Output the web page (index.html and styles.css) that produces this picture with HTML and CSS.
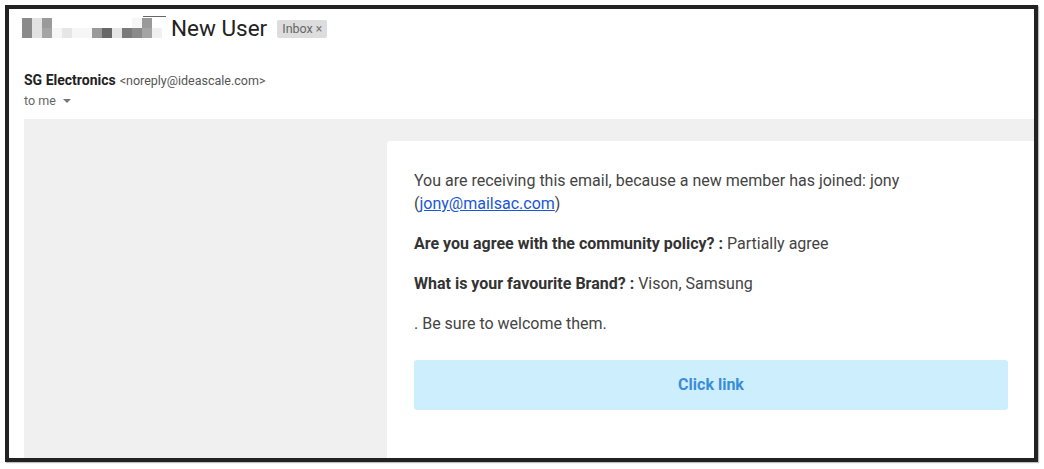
FILE: index.html
```html
<!DOCTYPE html>
<html lang="en">
<head>
<meta charset="utf-8">
<title>New User</title>
<link rel="stylesheet" href="styles.css">
</head>
<body>
<div class="frame">
  <div class="title-row">
    <div class="mosaic">
      <i class="c1"></i><i class="c2"></i><i class="c3"></i><i class="c0"></i><i class="c0"></i><i class="c0"></i><i class="c0"></i><i class="c0"></i><i class="c0"></i><i class="c0"></i><i class="c0"></i><i class="cf"></i><i class="c3"></i><i class="c0"></i>
      <i class="c1"></i><i class="c2"></i><i class="c4"></i><i class="cf"></i><i class="c5"></i><i class="cf"></i><i class="cf"></i><i class="c3"></i><i class="c6"></i><i class="c5"></i><i class="c7"></i><i class="c1"></i><i class="c4"></i><i class="c8"></i>
    </div>
    <h1 class="subject">New User</h1>
    <span class="chip">Inbox <span class="chip-x">×</span></span>
  </div>
  <div class="sender">
    <div class="from"><span class="from-name">SG Electronics</span> <span class="from-addr">&lt;noreply@ideascale.com&gt;</span></div>
    <div class="to">to me <svg class="caret" width="8" height="4" viewBox="0 0 8 4"><path d="M0 0h8L4 4z" fill="#777"/></svg></div>
  </div>
  <div class="mail-bg">
    <div class="card">
      <p class="para">You are receiving this email, because a new member has joined: jony <span class="nowrap">(<a class="link" href="#">jony@mailsac.com</a>)</span></p>
      <p class="para"><b class="label">Are you agree with the community policy? :</b> Partially agree</p>
      <p class="para"><b class="label">What is your favourite Brand? :</b> Vison, Samsung</p>
      <p class="para">. Be sure to welcome them.</p>
      <a class="button" href="#">Click link</a>
    </div>
  </div>
</div>
</body>
</html>
```
FILE: styles.css
```css
html, body {
  margin: 0;
  padding: 0;
  background: #ffffff;
}
body {
  font-family: Roboto, "Liberation Sans", Arial, sans-serif;
  width: 1044px;
  height: 469px;
  overflow: hidden;
}
.frame {
  margin: 5px 0 0 5px;
  height: 449px;
  width: 1010px;
  border: 4px solid #222222;
  box-shadow: 1px 1px 1px rgba(0,0,0,0.25);
  display: flex;
  flex-direction: column;
  padding-left: 15px;
  box-sizing: content-box;
  overflow: hidden;
}
.title-row {
  display: flex;
  align-items: center;
  height: 28px;
  margin-top: 5px;
}
.mosaic {
  position: relative;
  margin-left: -2px;
  display: grid;
  grid-template-columns: repeat(14, 10px);
  grid-template-rows: 10px 10px;
  width: 140px;
  height: 20px;
}
.mosaic::after {
  content: "";
  position: absolute;
  left: 121px;
  top: -2px;
  width: 23px;
  height: 1px;
  background: #666;
}
.mosaic i { display: block; }
.c0 { background: #ffffff; }
.cf { background: #f6f6f6; }
.c1 { background: #8a8a8a; }
.c2 { background: #e2e2e2; }
.c3 { background: #9a9a9a; }
.c4 { background: #a4a4a4; }
.c5 { background: #e6e6e6; }
.c6 { background: #686868; }
.c7 { background: #7a7a7a; }
.c8 { background: #f0f0f0; }
.subject {
  margin: 0 0 0 9px;
  font-family: Roboto, "Open Sans", sans-serif;
  font-weight: 400;
  font-size: 22.5px;
  color: #222222;
  line-height: 28px;
}
.chip {
  margin-left: 10px;
  background: #dddddd;
  color: #666666;
  font-family: Roboto, Arial, sans-serif;
  font-size: 12.5px;
  line-height: 18px;
  height: 18px;
  padding: 0 5px;
  border-radius: 2px;
  margin-top: 2px;
}
.chip-x { font-size: 12px; color: #777; }
.sender {
  margin-top: 30px;
  line-height: 16px;
}
.from-name {
  font-size: 14px;
  font-weight: 700;
  color: #222222;
}
.from-addr {
  font-size: 12.5px;
  color: #555555;
}
.to {
  margin-top: 4px;
  font-size: 12.5px;
  color: #666666;
  display: flex;
  align-items: center;
  gap: 7px;
}
.caret { display: block; }
.mail-bg {
  margin-top: 10px;
  flex: 1;
  background: #f0f0f0;
  padding: 22px 0 0 363px;
  display: flex;
}
.card {
  flex: 1;
  background: #ffffff;
  border-radius: 3px 0 0 0;
  padding: 28px 26px 0 27px;
}
.para {
  margin: 0 0 17px 0;
  font-size: 16px;
  line-height: 23px;
  color: #444444;
}
.nowrap { white-space: nowrap; }
.label {
  font-weight: 700;
  color: #333333;
}
.link {
  color: #1a56d6;
  text-decoration: underline;
}
.button {
  display: block;
  margin-top: 25px;
  height: 50px;
  line-height: 50px;
  text-align: center;
  background: #cdeefc;
  color: #3a8dd8;
  font-weight: 700;
  font-size: 16px;
  border-radius: 3px;
  text-decoration: none;
}
```
